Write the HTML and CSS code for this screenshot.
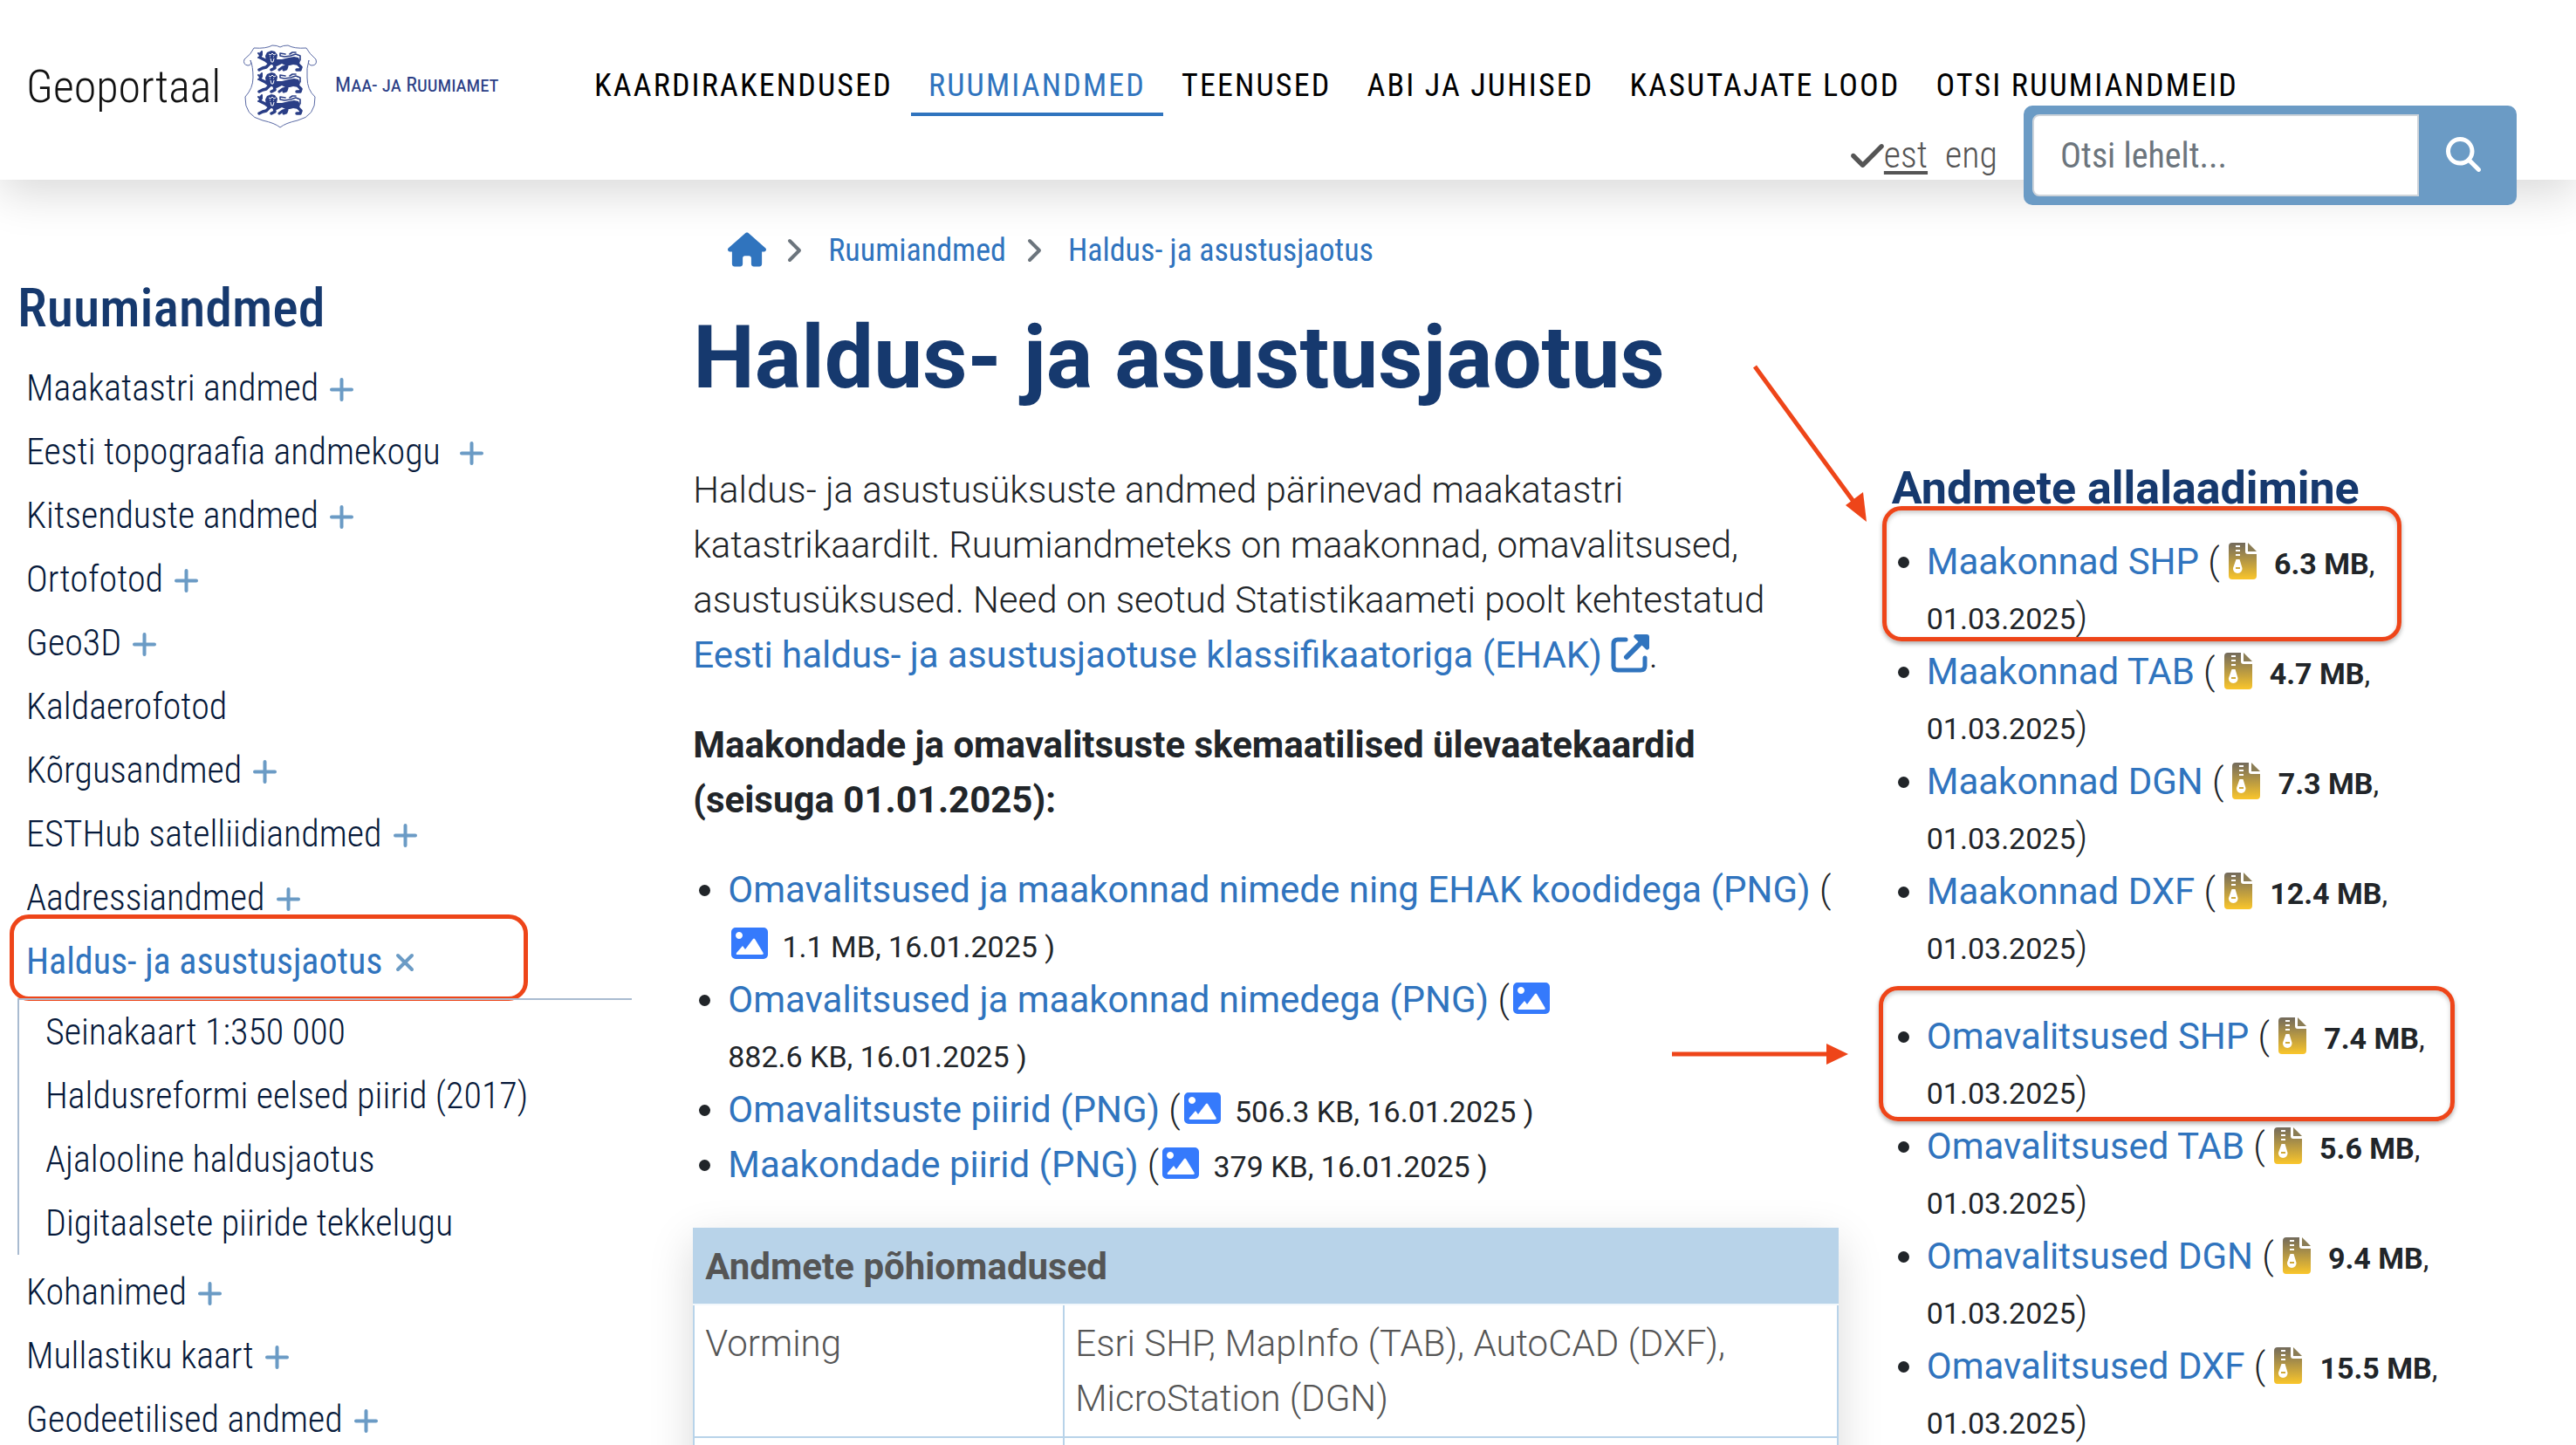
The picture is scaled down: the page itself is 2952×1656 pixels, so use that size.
FILE: index.html
```html
<!DOCTYPE html>
<html lang="et">
<head>
<meta charset="utf-8">
<meta name="viewport" content="width=device-width, initial-scale=1">
<title>Haldus- ja asustusjaotus | Geoportaal</title>
<link rel="stylesheet" href="styles.css">
</head>
<body>
<svg class="sprite" aria-hidden="true">
  <defs>
    <linearGradient id="zip-fill" x1="0" y1="0" x2="0" y2="1">
      <stop offset="0" stop-color="#726a5c"/>
      <stop offset="1" stop-color="#fac62b"/>
    </linearGradient>
    <symbol id="i-plus" viewBox="0 0 27 27"><path d="M13.500 2v23M2 13.500h23" fill="none" stroke="currentColor" stroke-width="4" stroke-linecap="round"/></symbol>
    <symbol id="i-close" viewBox="0 0 27 27"><path d="M5 5l16 16M21 5L5 21" fill="none" stroke="currentColor" stroke-width="4" stroke-linecap="round"/></symbol>
    <symbol id="i-chevron" viewBox="0 0 18 28"><path d="M3 3l11 11L3 25" fill="none" stroke="currentColor" stroke-width="4" stroke-linecap="round" stroke-linejoin="round"/></symbol>
    <symbol id="i-image" viewBox="0 0 42 36"><path fill="#357afc" fill-rule="evenodd" d="M5 0h32a5 5 0 0 1 5 5v26a5 5 0 0 1-5 5H5a5 5 0 0 1-5-5V5a5 5 0 0 1 5-5zM9 5a4 4 0 1 0 .01 0zM25 13L16 25l-3-4L6 29q-1 2 1 2h28q3 0 1-3L27 13q-1-1-2 0z"/></symbol>
    <symbol id="i-zip" viewBox="0 0 32 42"><path fill="url(#zip-fill)" fill-rule="evenodd" d="M4 0h15v10a3 3 0 0 0 3 3h10v25a4 4 0 0 1-4 4H4a4 4 0 0 1-4-4V4a4 4 0 0 1 4-4zM8 3v2h5V3zM8 8v2h5V8zM8 13v2h5v-2zM8.500 19L5 29a5.300 5.300 0 1 0 10.500 0L12.500 19zM8 28h5v2H8z"/><path d="M22 0l10 10H22z" fill="#8b7d55"/></symbol>
    <symbol id="lion" viewBox="0 0 52 24">
      <g fill="none" stroke="#2a3e86" stroke-linecap="round" stroke-linejoin="round">
        <path d="M4 3L3 8l6 3 5 4" stroke-width="3.500"/>
        <path d="M1 3l3 3M5 1l0 4M1 8l3 0" stroke-width="2"/>
        <path d="M15 14l-5 5-4 1-4 2" stroke-width="3.500"/>
        <path d="M19 14l1 6-4 2" stroke-width="3.500"/>
        <path d="M45 10l2 6 3 3-1 3-4 0" stroke-width="3.500"/>
        <path d="M37 13l-4 5-4 1-4 3M34 18l-1 3-3 1" stroke-width="3"/>
        <path d="M49 11l0-5-5-2-6 2-7 1-5-1 0-3 6 1M37 4l3-2 4 0" stroke-width="1.600"/>
      </g>
      <path d="M16 0l4 1 3 4-1 5 6 0 8-2 6-1 5 1 2 4-2 5-6-1-4 1-5 0-4-2-6 3-6-2-6-3-1-7 2-4z" fill="#2a3e86"/>
      <path d="M13 4l2 1 2-2 2 2 2-1M14 7h1M18 7h1M15 9l1 4 2 0 1-4" stroke="#fff" fill="none"/>
    </symbol>
  </defs>
</svg>

<header class="header">
  <a class="brand" href="#">
    <span class="brand-name">Geoportaal</span>
    <svg class="arms" viewBox="0 0 86 96" aria-hidden="true">
      <path d="M13 4q14 1 21-3 6 0 9 2 3-2 9-2 7 4 21 3 3 6 11 13 2 7-5 7-5-1-3-6-3 9-2 20 0 14 9 22 1 22-20 27-14 3-20 8-6-5-20-8Q2 82 3 60q9-10 9-22 0-13-3-20 2 6-3 6-6-1-4-7Q10 11 13 4z" fill="none" stroke="#5a6aa5"/>
      <use href="#lion" x="17" y="7" width="52" height="24"/>
      <use href="#lion" x="17" y="32" width="52" height="24"/>
      <use href="#lion" x="17" y="57" width="52" height="24"/>
    </svg>
    <span class="agency">Maa- ja Ruumiamet</span>
  </a>
  <div class="header-right">
    <nav class="nav" aria-label="Peamenüü">
      <a href="#">KAARDIRAKENDUSED</a>
      <a href="#" class="active">RUUMIANDMED</a>
      <a href="#">TEENUSED</a>
      <a href="#">ABI JA JUHISED</a>
      <a href="#">KASUTAJATE LOOD</a>
      <a href="#">OTSI RUUMIANDMEID</a>
    </nav>
    <div class="tools">
      <div class="langs">
        <svg class="check" viewBox="0 96 448 320" aria-hidden="true"><path fill="currentColor" d="M438.600 105.400c12.500 12.500 12.500 32.800 0 45.300l-256 256c-12.500 12.500-32.800 12.500-45.300 0l-128-128c-12.500-12.500-12.500-32.800 0-45.300s32.800-12.500 45.300 0L160 338.700 393.400 105.400c12.500-12.500 32.800-12.500 45.300 0z"/></svg>
        <a href="#" class="current">est</a>
        <a href="#">eng</a>
      </div>
      <form class="search">
        <input type="text" placeholder="Otsi lehelt..." aria-label="Otsi lehelt">
        <button type="button" aria-label="Otsi"><svg viewBox="0 0 512 512" aria-hidden="true"><path fill="currentColor" d="M416 208c0 45.900-14.900 88.300-40 122.700L502.600 457.400c12.500 12.500 12.500 32.800 0 45.300s-32.800 12.500-45.300 0L330.700 376c-34.400 25.200-76.800 40-122.700 40C93.100 416 0 322.900 0 208S93.100 0 208 0S416 93.100 416 208zM208 352a144 144 0 1 0 0-288 144 144 0 1 0 0 288z"/></svg></button>
      </form>
    </div>
  </div>
</header>

<div class="page">
  <aside class="sidebar">
    <h2>Ruumiandmed</h2>
    <ul class="menu">
      <li><a href="#">Maakatastri andmed</a><svg><use href="#i-plus"/></svg></li>
      <li><a href="#">Eesti topograafia andmekogu&nbsp;</a><svg><use href="#i-plus"/></svg></li>
      <li><a href="#">Kitsenduste andmed</a><svg><use href="#i-plus"/></svg></li>
      <li><a href="#">Ortofotod</a><svg><use href="#i-plus"/></svg></li>
      <li><a href="#">Geo3D</a><svg><use href="#i-plus"/></svg></li>
      <li><a href="#">Kaldaerofotod</a></li>
      <li><a href="#">Kõrgusandmed</a><svg><use href="#i-plus"/></svg></li>
      <li><a href="#">ESTHub satelliidiandmed</a><svg><use href="#i-plus"/></svg></li>
      <li><a href="#">Aadressiandmed</a><svg><use href="#i-plus"/></svg></li>
      <li class="open"><a href="#">Haldus- ja asustusjaotus</a><svg><use href="#i-close"/></svg><span class="mark mark-menu"></span></li>
      <li class="nested">
        <ul class="submenu">
          <li><a href="#">Seinakaart 1:350 000</a></li>
          <li><a href="#">Haldusreformi eelsed piirid (2017)</a></li>
          <li><a href="#">Ajalooline haldusjaotus</a></li>
          <li><a href="#">Digitaalsete piiride tekkelugu</a></li>
        </ul>
      </li>
      <li><a href="#">Kohanimed</a><svg><use href="#i-plus"/></svg></li>
      <li><a href="#">Mullastiku kaart</a><svg><use href="#i-plus"/></svg></li>
      <li><a href="#">Geodeetilised andmed</a><svg><use href="#i-plus"/></svg></li>
    </ul>
  </aside>

  <div class="top">
    <nav class="crumbs" aria-label="Asukoht">
      <a href="#" aria-label="Avaleht"><svg class="home" viewBox="0 0 576 512"><path fill="currentColor" d="M575.800 255.500c0 18-15 32.100-32 32.100h-32l.7 160.200c0 2.700-.2 5.400-.5 8.100V472c0 22.100-17.900 40-40 40H456c-1.100 0-2.200 0-3.300-.1c-1.400 .1-2.800 .1-4.200 .1H416 392c-22.100 0-40-17.900-40-40V448 384c0-17.700-14.300-32-32-32H256c-17.700 0-32 14.300-32 32v64 24c0 22.100-17.900 40-40 40H160 128.100c-1.500 0-3-.1-4.500-.2c-1.200 .1-2.400 .2-3.600 .2H104c-22.100 0-40-17.900-40-40V360c0-.9 0-1.900 .1-2.800V287.600H32c-18 0-32-14-32-32.100c0-9 3-17 10-24L266.400 8c7-7 15-8 22-8s15 2 21 7L564.800 231.500c8 7 12 15 11 24z"/></svg></a>
      <svg class="sep"><use href="#i-chevron"/></svg>
      <a href="#">Ruumiandmed</a>
      <svg class="sep"><use href="#i-chevron"/></svg>
      <a href="#">Haldus- ja asustusjaotus</a>
    </nav>
    <h1>Haldus- ja asustusjaotus</h1>
  </div>

  <main class="main">
    <p>Haldus- ja asustusüksuste andmed pärinevad maakatastri katastrikaardilt. Ruumiandmeteks on maakonnad, omavalitsused, asustusüksused. Need on seotud Statistikaameti poolt kehtestatud <a href="#">Eesti haldus- ja asustusjaotuse klassifikaatoriga (EHAK)<svg class="ext" viewBox="0 0 44 44" aria-hidden="true"><path d="M17 6H8q-5 0-5 5v25q0 5 5 5h26q5 0 5-5V27" fill="none" stroke="currentColor" stroke-width="5" stroke-linecap="round"/><path d="M18 26L36 8" stroke="currentColor" stroke-width="6" stroke-linecap="round"/><path d="M28 0h13q3 0 3 3v13q-2 3-4 1L27 4q-2-2 1-4z" fill="currentColor"/></svg></a>.</p>
    <p><strong>Maakondade ja omavalitsuste skemaatilised ülevaatekaardid (seisuga 01.01.2025):</strong></p>
    <ul class="files">
      <li><a href="#">Omavalitsused ja maakonnad nimede ning EHAK koodidega (PNG)</a> ( <svg class="img"><use href="#i-image"/></svg> <small class="meta">1.1 MB, 16.01.2025 )</small></li>
      <li><a href="#">Omavalitsused ja maakonnad nimedega (PNG)</a> (<svg class="img"><use href="#i-image"/></svg> <small class="meta">882.6 KB, 16.01.2025 )</small></li>
      <li><a href="#">Omavalitsuste piirid (PNG)</a> (<svg class="img"><use href="#i-image"/></svg> <small class="meta">506.3 KB, 16.01.2025 )</small></li>
      <li><a href="#">Maakondade piirid (PNG)</a> (<svg class="img"><use href="#i-image"/></svg> <small class="meta">379 KB, 16.01.2025 )</small></li>
    </ul>
    <table class="facts">
      <thead><tr><th colspan="2">Andmete põhiomadused</th></tr></thead>
      <tbody>
        <tr><td>Vorming</td><td>Esri SHP, MapInfo (TAB), AutoCAD (DXF), MicroStation (DGN)</td></tr>
        <tr><td>&nbsp;</td><td></td></tr>
      </tbody>
    </table>
  </main>

  <aside class="downloads">
    <h3>Andmete allalaadimine</h3>
    <ul class="files">
      <li><a href="#">Maakonnad SHP</a> (<svg class="zip"><use href="#i-zip"/></svg> <small><b>6.3 MB</b>,</small> <span class="meta"><small>01.03.2025</small>)</span>
        <span class="mark mark-county"></span>
        <svg class="arrow arrow-county" viewBox="0 0 136 186" aria-hidden="true"><path d="M4 4l114 156" stroke="#ee4519" stroke-width="5"/><path d="M132 182l-24-19 20-15z" fill="#ee4519"/></svg></li>
      <li><a href="#">Maakonnad TAB</a> (<svg class="zip"><use href="#i-zip"/></svg> <small><b>4.7 MB</b>,</small> <span class="meta"><small>01.03.2025</small>)</span></li>
      <li><a href="#">Maakonnad DGN</a> (<svg class="zip"><use href="#i-zip"/></svg> <small><b>7.3 MB</b>,</small> <span class="meta"><small>01.03.2025</small>)</span></li>
      <li><a href="#">Maakonnad DXF</a> (<svg class="zip"><use href="#i-zip"/></svg> <small><b>12.4 MB</b>,</small> <span class="meta"><small>01.03.2025</small>)</span></li>
    </ul>
    <ul class="files">
      <li><a href="#">Omavalitsused SHP</a> (<svg class="zip"><use href="#i-zip"/></svg> <small><b>7.4 MB</b>,</small> <span class="meta"><small>01.03.2025</small>)</span>
        <span class="mark mark-town"></span>
        <svg class="arrow arrow-town" viewBox="0 0 202 24" aria-hidden="true"><path d="M0 12h180" stroke="#ee4519" stroke-width="5"/><path d="M202 12l-25 12V0z" fill="#ee4519"/></svg></li>
      <li><a href="#">Omavalitsused TAB</a> (<svg class="zip"><use href="#i-zip"/></svg> <small><b>5.6 MB</b>,</small> <span class="meta"><small>01.03.2025</small>)</span></li>
      <li><a href="#">Omavalitsused DGN</a> (<svg class="zip"><use href="#i-zip"/></svg> <small><b>9.4 MB</b>,</small> <span class="meta"><small>01.03.2025</small>)</span></li>
      <li><a href="#">Omavalitsused DXF</a> (<svg class="zip"><use href="#i-zip"/></svg> <small><b>15.5 MB</b>,</small> <span class="meta"><small>01.03.2025</small>)</span></li>
    </ul>
  </aside>
</div>
</body>
</html>
```
FILE: styles.css
```css
:root {
  --blue: #3074be;
  --navy: #16396e;
  --soft: #6b9bc5;
  --ink: #212529;
  --red: #ee4519;
  --narrow: "Roboto Condensed", Roboto, sans-serif;
}

* { box-sizing: border-box; }

body {
  margin: 0;
  background: #fff;
  color: var(--ink);
  font: 300 42px/63px Roboto, sans-serif;
  overflow: hidden;
}

a { color: var(--blue); text-decoration: none; }
ul { margin: 0; padding: 0; list-style: none; }
h1, h2, h3 { margin: 0; color: var(--navy); }
.sprite { position: absolute; width: 0; height: 0; }

/* header */
.header {
  display: flex;
  align-items: flex-start;
  height: 206px;
  padding: 0 68px 0 30px;
  background: #fff;
  box-shadow: 0 16px 48px rgba(0, 0, 0, .15);
  font-family: var(--narrow);
}
.brand { display: flex; align-items: center; width: 631px; padding-top: 51px; }
.brand-name { width: 248px; color: #111; font-size: 52px; font-weight: 300; }
.arms { width: 86px; height: 96px; margin-right: 20px; }
.agency { padding-bottom: 4px; color: #2a3e86; font-size: 24px; font-weight: 400; font-variant: small-caps; white-space: nowrap; }
.header-right { flex: 1; }
.nav { display: flex; gap: 1px; padding-top: 67px; font-size: 36px; font-weight: 400; }
.nav a { padding: 0 20px; color: #000; line-height: 62px; letter-spacing: .06em; white-space: nowrap; border-bottom: 4px solid transparent; }
.nav .active { color: var(--blue); border-color: var(--blue); }
.tools { display: flex; justify-content: flex-end; align-items: center; gap: 30px; margin-top: -12px; }
.langs { display: flex; align-items: center; color: #555; }
.langs a { color: #555; margin-right: 20px; line-height: 48px; }
.langs a:last-child { margin-right: 0; }
.langs .current { text-decoration: underline 4px; text-underline-offset: 4px; }
.check { width: 38px; height: 27px; }
.search { display: flex; width: 565px; padding: 10px; background: var(--soft); border-radius: 10px; }
.search input {
  flex: 1;
  min-width: 0;
  height: 94px;
  padding: 0 30px;
  border: 2px solid #ced4da;
  border-radius: 8px 0 0 8px;
  font: 400 40px/60px var(--narrow);
}
.search input::placeholder { color: #6c757d; opacity: 1; }
.search button { width: 102px; padding: 0; border: 0; background: none; color: #fff; }
.search svg { width: 40px; height: 40px; }

/* page grid */
.page {
  display: grid;
  grid-template-columns: 704fr 1321fr 716fr;
  grid-template-rows: auto 1fr;
  column-gap: 61px;
  padding: 0 68px 0 20px;
}
.sidebar { grid-row: 1 / 3; padding-top: 114px; font-family: var(--narrow); }
.sidebar h2 { font-size: 62px; line-height: 66px; font-weight: 500; margin-bottom: 22px; }
.menu li { position: relative; display: flex; align-items: center; gap: 13px; padding: 5px 10px; }
.menu a { color: #06193a; }
.menu svg { width: 27px; height: 27px; margin-top: 3px; color: var(--soft); }
.menu .open a { color: var(--blue); font-weight: 400; }
.menu .nested { display: block; padding: 6px 0; }
.submenu { border: solid #a9bbd0; border-width: 2px 0 0 2px; }
.submenu li { padding-left: 30px; }

.top { grid-column: 2 / 4; padding-left: 9px; }
.crumbs { display: flex; align-items: center; margin: 49px 0 0 40px; font: 400 36px/64px var(--narrow); }
.crumbs svg { display: block; }
.home { width: 44px; height: 40px; margin-bottom: 3px; }
.crumbs .sep { width: 18px; height: 28px; margin: 0 29px 0 24px; color: #6c757d; }
h1 { margin-top: 31px; font-size: 100px; line-height: 120px; font-weight: 700; }

.main { grid-column: 2; padding: 60px 0 0 9px; }
p { margin: 0 0 40px; }
.main a, .downloads a { font-weight: 400; }
strong, b { font-weight: 700; }
.ext { width: 44px; height: 44px; margin-left: 10px; vertical-align: -6px; }
.files { list-style: disc; padding-left: 40px; }
.files li { position: relative; }
.meta { white-space: nowrap; }
small { font-size: 34px; line-height: 34px; font-weight: 400; }
.img { width: 42px; height: 36px; margin: 0 6px 0 4px; vertical-align: -2px; }
.zip { width: 32px; height: 42px; margin: 0 10px; vertical-align: -6px; }

.facts {
  width: 100%;
  margin-top: 41px;
  border-collapse: collapse;
  color: #555;
  box-shadow: 0 16px 48px rgba(0, 0, 0, .15);
}
.facts th, .facts td { padding: 12px; text-align: left; vertical-align: top; border: 2px solid #b8d3e9; }
.facts th { padding: 11px 12px; background: #b8d3e9; font-weight: 700; border-bottom-color: #f2f8fc; }
.facts td:first-child { width: 424px; }

.downloads { grid-column: 3; padding: 60px 40px 0 0; }
.downloads h3 { font-size: 52px; line-height: 60px; font-weight: 700; margin-bottom: 22px; }
.downloads .files + .files { margin-top: 40px; }

/* callouts drawn over the page */
.mark { position: absolute; border: 5px solid var(--red); border-radius: 22px; box-shadow: 0 3px 5px rgba(0, 0, 0, .3), inset 0 3px 5px rgba(0, 0, 0, .2); }
.mark-menu { left: -9px; top: -17px; width: 594px; height: 99px; box-shadow: none; }
.mark-county { left: -51px; top: -32px; width: 595px; height: 155px; }
.mark-town { left: -55px; top: -26px; width: 660px; height: 155px; }
.arrow { position: absolute; }
.arrow-county { left: -201px; top: -196px; width: 136px; height: 186px; }
.arrow-town { left: -292px; top: 40px; width: 202px; height: 24px; }
```
